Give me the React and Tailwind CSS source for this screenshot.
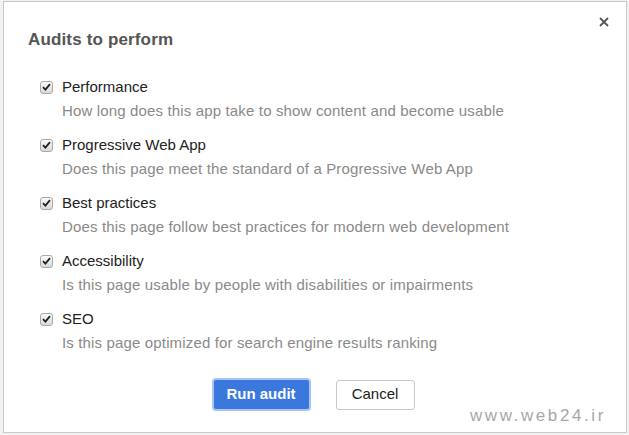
const audits = [
  { name: 'Performance', desc: 'How long does this app take to show content and become usable' },
  { name: 'Progressive Web App', desc: 'Does this page meet the standard of a Progressive Web App' },
  { name: 'Best practices', desc: 'Does this page follow best practices for modern web development' },
  { name: 'Accessibility', desc: 'Is this page usable by people with disabilities or impairments' },
  { name: 'SEO', desc: 'Is this page optimized for search engine results ranking' },
];

function Check() {
  return (
    <div className="w-[13px] h-[13px] rounded-[3px] border border-[#a9a9a9] bg-gradient-to-b from-[#fafafa] to-[#d9d9d9] flex items-center justify-center shrink-0">
      <svg width="9" height="8" viewBox="0 0 9 8">
        <path d="M1 4.2 L3.4 6.6 L8 1.2" fill="none" stroke="#222" strokeWidth="1.8" />
      </svg>
    </div>
  );
}

export default function App() {
  return (
    <div className="w-[629px] h-[435px] bg-[#f2f2f2] pl-[3px] pt-[1px] overflow-hidden" style={{ fontFamily: '"Liberation Sans", Arial, sans-serif' }}>
      <div className="relative w-[624px] h-[432px] bg-white border border-[#c9c9c9]">
        <button className="absolute right-[17px] top-[15px] text-[#555]">
          <svg width="10" height="10" viewBox="0 0 10 10">
            <path d="M1 1 L9 9 M9 1 L1 9" stroke="#555" strokeWidth="1.8" />
          </svg>
        </button>

        <h1 className="pl-[24px] pt-[28px] text-[17px] leading-[20px] font-bold text-[#555] tracking-[0.15px]">Audits to perform</h1>

        <div className="mt-[28px] flex flex-col gap-[16px]">
          {audits.map((a) => (
            <div key={a.name} className="pl-[36px]">
              <div className="flex items-center h-[18px] gap-[9px]">
                <Check />
                <span className="text-[15px] leading-[18px] text-[#222]">{a.name}</span>
              </div>
              <div className="mt-[6px] pl-[22px] text-[15px] leading-[18px] text-[#8a8a8a] tracking-[0.15px]">{a.desc}</div>
            </div>
          ))}
        </div>

        <div className="mt-[26px] pr-[4px] flex justify-center gap-[25px] items-center">
          <button className="w-[99px] h-[33px] rounded-[4px] bg-[#3b78dd] border-2 border-[#a9c6f2] text-white text-[15px] font-bold">
            Run audit
          </button>
          <button className="w-[79px] h-[30px] rounded-[3px] bg-white border border-[#c8c8c8] text-[#222] text-[15px]">
            Cancel
          </button>
        </div>

        <span className="absolute right-[20px] bottom-[4px] text-[17px] tracking-[2.6px] text-[#a8a8a8]">www.web24.ir</span>
      </div>
    </div>
  );
}
